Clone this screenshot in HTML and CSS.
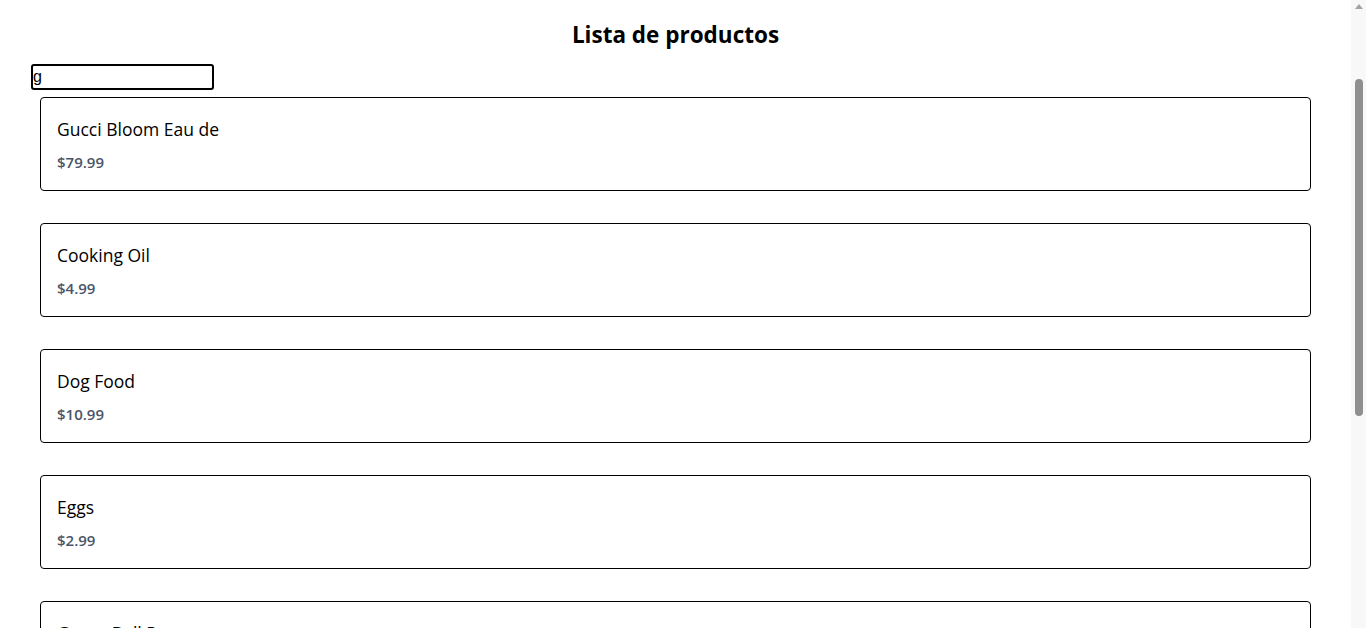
FILE: index.html
```html
<!DOCTYPE html>
<html lang="es">
<head>
<meta charset="utf-8">
<title>Lista de productos</title>
<link rel="stylesheet" href="styles.css">
</head>
<body>
<div class="shell">
<main class="page">
  <h1 class="title">Lista de productos</h1>
  <input class="search" type="text" value="g">
  <ul class="list">
    <li class="card"><p class="name">Gucci Bloom Eau de</p><p class="price">$79.99</p></li>
    <li class="card"><p class="name">Cooking Oil</p><p class="price">$4.99</p></li>
    <li class="card"><p class="name">Dog Food</p><p class="price">$10.99</p></li>
    <li class="card"><p class="name">Eggs</p><p class="price">$2.99</p></li>
    <li class="card"><p class="name">Green Bell Pepper</p><p class="price">$1.29</p></li>
    <li class="card"><p class="name">Green Chili Pepper</p><p class="price">$0.99</p></li>
    <li class="card"><p class="name">Honey Jar</p><p class="price">$6.99</p></li>
    <li class="card"><p class="name">Orange Juice</p><p class="price">$3.49</p></li>
  </ul>
</main>
<div class="scrollbar" aria-hidden="true">
  <span class="arrow"></span>
  <span class="thumb"></span>
</div>
</div>
</body>
</html>
```
FILE: styles.css
```css
html, body {
  margin: 0;
  padding: 0;
  background: #ffffff;
}
body {
  font-family: "Open Sans", "Noto Sans", sans-serif;
  color: #000;
}
.shell {
  display: grid;
  grid-template-columns: 1fr 15px;
  align-items: start;
}
.page {
  display: flex;
  flex-direction: column;
  min-width: 0;
}
.scrollbar {
  position: sticky;
  top: 0;
  height: 100vh;
  background: #f8f8f8;
  display: flex;
  flex-direction: column;
  align-items: center;
}
.arrow {
  margin-top: 4px;
  width: 0;
  height: 0;
  border-left: 4px solid transparent;
  border-right: 4px solid transparent;
  border-bottom: 5px solid #a3a3a3;
}
.thumb {
  margin-top: 70px;
  width: 8px;
  height: 337px;
  border-radius: 4px;
  background: #8f8f8f;
}
.title {
  margin: 19px 0 0;
  font-size: 22.5px;
  font-weight: 700;
  line-height: 32px;
  text-align: center;
}
.search {
  margin: 13px 0 0 31px;
  width: 183px;
  height: 26px;
  box-sizing: border-box;
  border: 2px solid #000;
  border-radius: 3px;
  padding: 0;
  font-family: "Liberation Sans", Arial, sans-serif;
  font-size: 16px;
  line-height: 22px;
  color: #000;
  outline: none;
}
.list {
  list-style: none;
  margin: 7px 40px 0;
  padding: 0;
  display: flex;
  flex-direction: column;
  gap: 32px;
}
.card {
  border: 1px solid #000;
  border-radius: 4px;
  padding: 18px 16px 18px;
  height: 94px;
  box-sizing: border-box;
}
.name {
  margin: 0;
  font-size: 17.5px;
  line-height: 26px;
}
.price {
  margin: 10px 0 0;
  font-size: 15px;
  font-weight: 600;
  line-height: 20px;
  color: #4a5568;
}
```
